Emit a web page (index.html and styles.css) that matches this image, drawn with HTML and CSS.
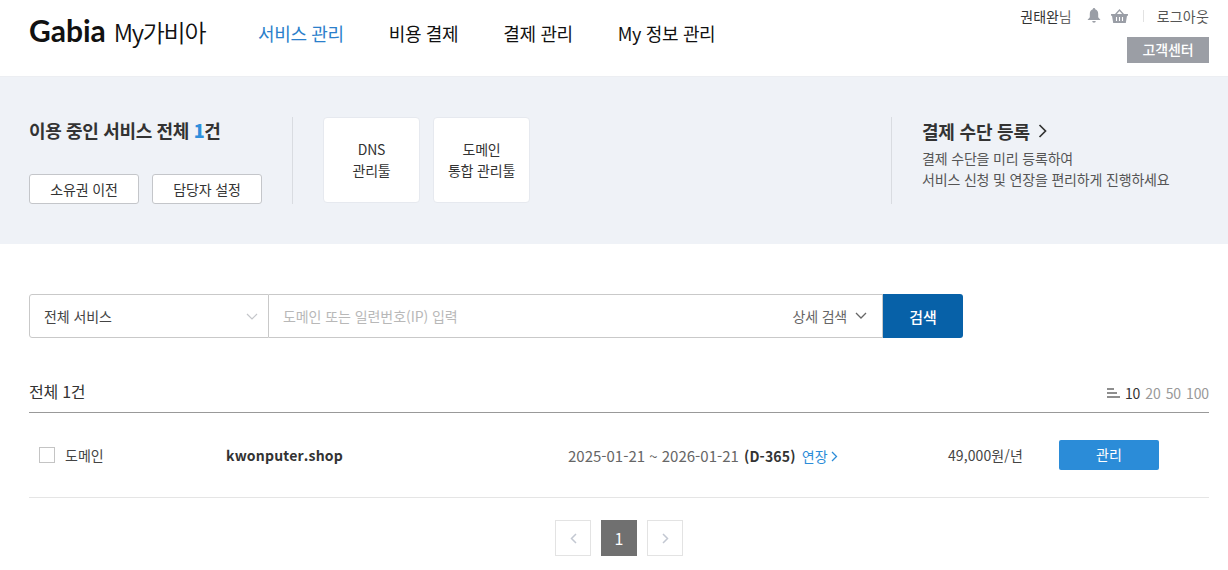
FILE: index.html
```html
<!DOCTYPE html>
<html lang="ko">
<head>
<meta charset="utf-8">
<title>My가비아</title>
<link rel="stylesheet" href="styles.css">
</head>
<body>
<header class="top">
  <div class="brand"><span class="logo">Gabia</span><span class="my">My가비아</span></div>
  <nav class="gnb">
    <a class="on">서비스 관리</a><a>비용 결제</a><a>결제 관리</a><a>My 정보 관리</a>
  </nav>
  <div class="util">
    <div class="util-row">
      <span class="user">권태완<i>님</i></span>
      <svg class="ic-bell" width="14" height="15" viewBox="0 0 14 15"><path fill="#9a9ea6" d="M7 0a1.2 1.2 0 0 1 1.2 1.3C10.300 1.900 11.200 3.700 11.200 6v3.200L13.500 12H.5l2.300-2.800V6c0-2.300.9-4.100 3-4.700A1.200 1.200 0 0 1 7 0zM5.200 13h3.600a1.800 1.800 0 0 1-3.600 0z"/></svg>
      <svg class="ic-basket" width="17" height="14" viewBox="0 0 17 14"><path fill="none" stroke="#9a9ea6" stroke-width="1.300" d="M4.500 5.500 8.500 1l4 4.500"/><path fill="#9a9ea6" d="M0 5h17v1.800h-1L14.800 14H2.200L1 6.800H0z"/><path stroke="#fff" stroke-width="1.100" d="M5.500 8v4M8.500 8v4M11.500 8v4"/></svg>
      <span class="sep"></span>
      <span class="logout">로그아웃</span>
    </div>
    <a class="cs">고객센터</a>
  </div>
</header>

<section class="band">
  <div class="summary">
    <h2>이용 중인 서비스 전체 <b>1</b>건</h2>
    <div class="summary-btns"><a class="btn-line">소유권 이전</a><a class="btn-line">담당자 설정</a></div>
  </div>
  <div class="tools">
    <a class="tool">DNS<br>관리툴</a>
    <a class="tool">도메인<br>통합 관리툴</a>
  </div>
  <div class="pay">
    <h3>결제 수단 등록 <svg width="10" height="14" viewBox="0 0 10 14"><path fill="none" stroke="#333" stroke-width="1.700" d="M1.500 1l6 6-6 6"/></svg></h3>
    <p>결제 수단을 미리 등록하여<br>서비스 신청 및 연장을 편리하게 진행하세요</p>
  </div>
</section>

<main class="content">
  <form class="search">
    <div class="sel">전체 서비스<svg width="12" height="7" viewBox="0 0 12 7"><path fill="none" stroke="#c4c6ca" stroke-width="1.200" d="M1 1l5 5 5-5"/></svg></div>
    <div class="field">
      <span class="ph">도메인 또는 일련번호(IP) 입력</span>
      <span class="detail">상세 검색<svg width="12" height="7" viewBox="0 0 12 7"><path fill="none" stroke="#666" stroke-width="1.300" d="M1 1l5 5 5-5"/></svg></span>
    </div>
    <button type="button" class="go">검색</button>
  </form>

  <div class="list-head">
    <span class="total">전체 1건</span>
    <div class="per">
      <svg width="13" height="11" viewBox="0 0 13 11"><path fill="#8e8e8e" d="M0 0h7v2H0zM0 4h10v2H0zM0 8h13v2H0z"/></svg>
      <b>10</b><span>20</span><span>50</span><span>100</span>
    </div>
  </div>

  <div class="row">
    <label class="type"><span class="check"></span>도메인</label>
    <strong class="domain">kwonputer.shop</strong>
    <div class="period">2025-01-21 ~ 2026-01-21 <b>(D-365)</b> <a>연장<svg width="7" height="11" viewBox="0 0 7 11"><path fill="none" stroke="#2b8cd8" stroke-width="1.300" d="M1 1l4.500 4.500L1 10"/></svg></a></div>
    <div class="price">49,000원/년</div>
    <a class="manage">관리</a>
  </div>

  <div class="pager">
    <a class="pg"><svg width="7" height="11" viewBox="0 0 7 11"><path fill="none" stroke="#c3c8d2" stroke-width="1.500" d="M6 1L1.500 5.500 6 10"/></svg></a>
    <a class="pg cur">1</a>
    <a class="pg"><svg width="7" height="11" viewBox="0 0 7 11"><path fill="none" stroke="#c3c8d2" stroke-width="1.500" d="M1 1l4.500 4.500L1 10"/></svg></a>
  </div>
</main>
</body>
</html>
```

FILE: styles.css
```css
* { box-sizing: border-box; }
html, body { margin: 0; padding: 0; }
body {
  width: 1228px;
  height: 570px;
  overflow: hidden;
  background: #fff;
  color: #333;
  font-family: "Noto Sans CJK KR", "Noto Sans", sans-serif;
  font-size: 14px;
}
h2, h3, p { margin: 0; }

.top { height: 77px; display: flex; padding: 0 19px 0 29px; border-bottom: 1px solid #eceef2; position: relative; }
.brand { width: 229px; display: flex; align-items: baseline; padding-top: 8px; height: 50px; color: #111; }
.logo { font-family: "Lato", sans-serif; font-weight: 700; font-size: 30px; line-height: 44px; margin-right: 8px; }
.my { font-size: 24px; line-height: 44px; font-weight: 350; letter-spacing: -1.3px; }
.gnb { display: flex; gap: 45px; padding-top: 20px; font-size: 18px; line-height: 26px; color: #111; letter-spacing: -.35px; }
.gnb .on { color: #2b7fcb; }
.util { margin-left: auto; display: flex; flex-direction: column; align-items: flex-end; }
.util-row { display: flex; align-items: center; height: 31px; font-size: 14px; color: #555; letter-spacing: -.05px; }
.user { color: #333; }
.user i { font-style: normal; color: #666; }
.logout { letter-spacing: .2px; }
.ic-bell { margin-left: 15px; }
.ic-basket { margin-left: 10px; }
.sep { width: 1px; height: 12px; background: #e2e2e2; margin: 0 13px 0 15px; }
.cs { margin-top: 6px; width: 82px; height: 26px; background: #9b9ea5; color: #fff; font-size: 14px; font-weight: 500; line-height: 25px; text-align: center; letter-spacing: -.1px; }

.band { height: 167px; background: #eff2f7; display: flex; padding: 40px 0 0 29px; }
.summary { width: 264px; height: 87px; border-right: 1px solid #d9dce1; }
.summary h2 { font-size: 18px; line-height: 27px; font-weight: 700; color: #333; letter-spacing: -.35px; }
.summary h2 b { color: #2f8fdc; }
.summary-btns { display: flex; gap: 13px; margin-top: 30px; }
.btn-line { width: 110px; height: 30px; background: #fff; border: 1px solid #c4c6ca; border-radius: 3px; font-size: 14px; line-height: 28px; text-align: center; color: #333; letter-spacing: -.1px; }
.tools { display: flex; gap: 13px; margin-left: 30px; }
.tool { width: 97px; height: 86px; background: #fff; border: 1px solid #e6e9ef; border-radius: 4px; font-size: 14px; line-height: 21px; text-align: center; color: #333; padding-top: 21px; letter-spacing: -.2px; }
.pay { margin-left: 361px; height: 87px; border-left: 1px solid #d9dce1; padding-left: 30px; }
.pay h3 { font-size: 18px; line-height: 28px; font-weight: 700; color: #333; letter-spacing: -.2px; display: flex; align-items: center; gap: 8px; }
.pay p { margin-top: 3px; font-size: 14px; line-height: 21px; color: #555; letter-spacing: -.17px; }

.content { padding: 50px 19px 0 29px; }
.search { display: flex; height: 44px; width: 934px; }
.sel { width: 240px; border: 1px solid #c9c9c9; border-radius: 3px 0 0 3px; display: flex; align-items: center; justify-content: space-between; padding: 0 10px 0 14px; font-size: 14px; color: #444; letter-spacing: -.1px; }
.field { flex: 1; border: 1px solid #c9c9c9; border-left: 0; display: flex; align-items: center; justify-content: space-between; padding: 0 15px 0 14px; }
.ph { color: #b8b8b8; font-size: 14px; letter-spacing: -.07px; }
.detail { color: #666; font-size: 14px; line-height: 20px; display: flex; align-items: center; gap: 8px; letter-spacing: -.2px; margin-top: -1px; }
.go { width: 80px; border: 0; background: #0761a8; color: #fff; font: 500 15px "Noto Sans CJK KR", sans-serif; border-radius: 0 3px 3px 0; padding: 0; }

.list-head { margin-top: 38px; height: 37px; display: flex; align-items: flex-start; justify-content: space-between; border-bottom: 1px solid #999; }
.total { font-size: 16px; line-height: 22px; color: #333; letter-spacing: -.25px; padding-top: 4px; box-sizing: content-box; }
.per { display: flex; align-items: center; gap: 5px; font-size: 14px; line-height: 18px; padding-top: 8px; color: #999; letter-spacing: -.1px; }
.per b { font-weight: 400; color: #333; }

.row { height: 85px; display: flex; align-items: center; border-bottom: 1px solid #e5e5e5; padding-left: 10px; }
.type { width: 187px; display: flex; align-items: center; gap: 10px; font-size: 14px; color: #444; }
.check { width: 16px; height: 16px; border: 1px solid #c4c4c4; background: #fff; }
.domain { width: 342px; font-size: 14px; font-weight: 700; color: #333; letter-spacing: .2px; }
.period { width: 380px; font-size: 15px; color: #666; white-space: pre; }
.period b { color: #333; font-weight: 700; font-size: 14px; margin-left: 1px; letter-spacing: .15px; }
.period a { color: #2b8cd8; font-size: 14px; margin-left: 2px; }
.period svg { margin-left: 3px; }
.price { width: 111px; font-size: 14px; color: #444; letter-spacing: .1px; }
.manage { width: 100px; height: 30px; background: #2b8cd8; color: #fff; font-size: 14px; line-height: 29px; text-align: center; border-radius: 2px; }

.pager { display: flex; justify-content: center; gap: 10px; margin-top: 22px; }
.pg { width: 36px; height: 36px; border: 1px solid #e3e3e3; display: flex; align-items: center; justify-content: center; }
.cur { background: #707070; border-color: #707070; color: #fff; font-size: 16px; }
```
